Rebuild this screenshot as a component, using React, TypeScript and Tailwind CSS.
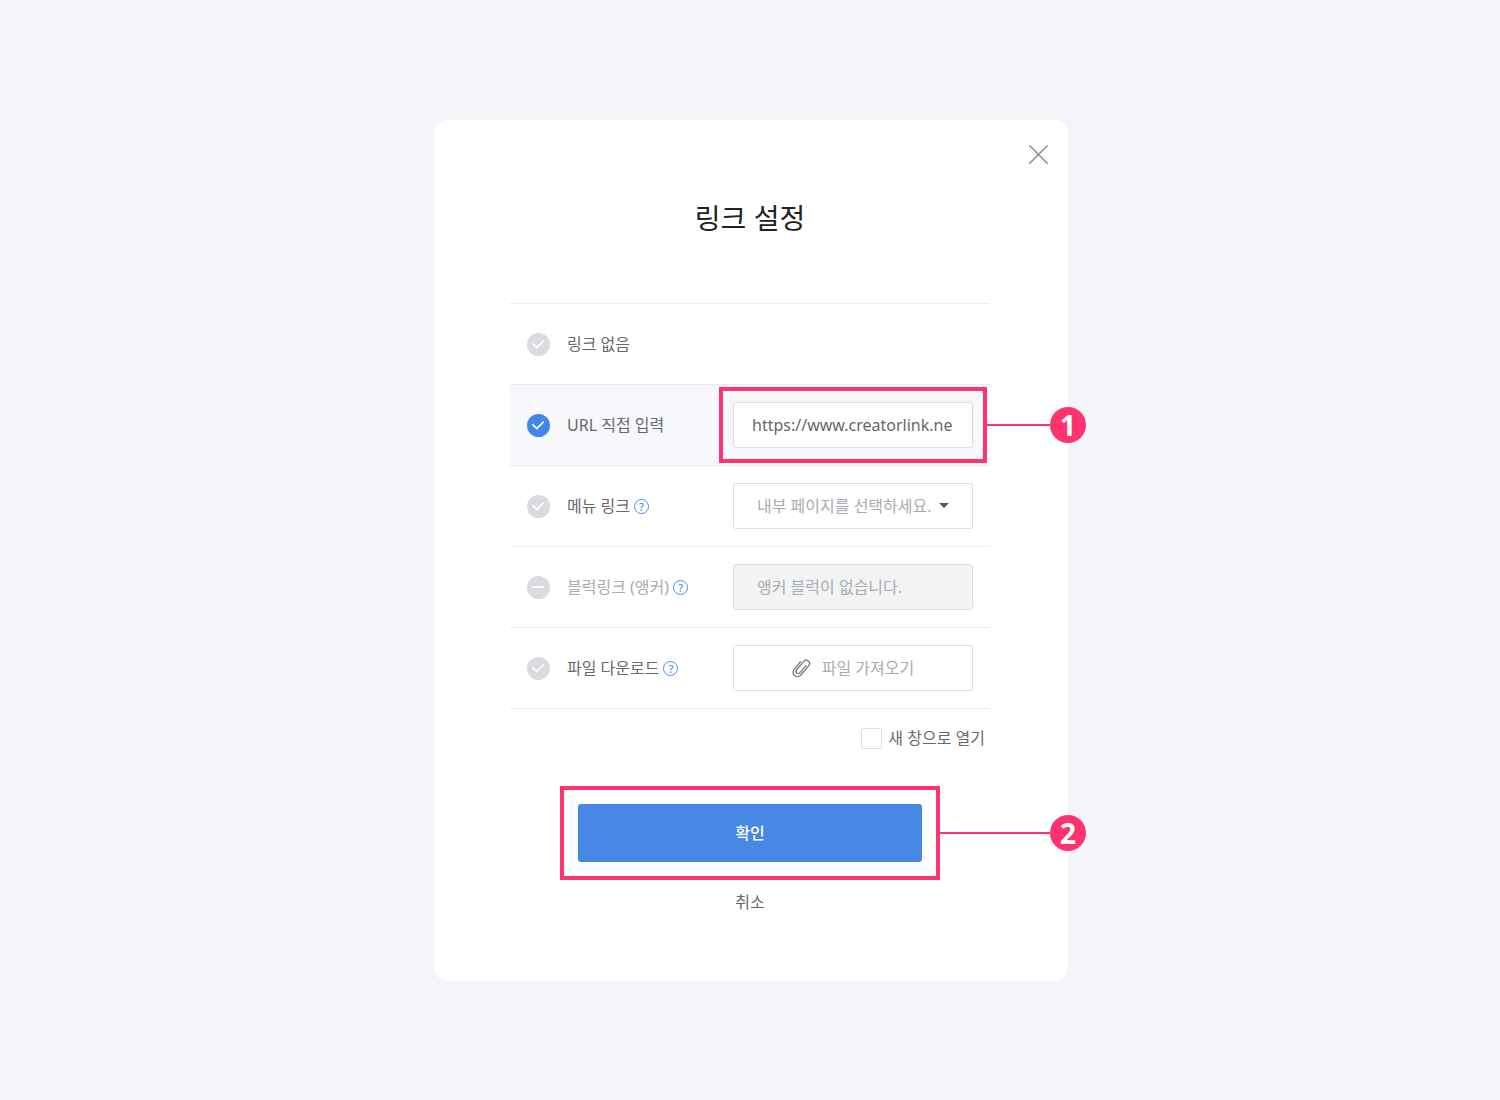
import { useState } from 'react';
import type { ReactNode } from 'react';
import { X } from 'lucide-react';

// Round radio with the check (or a dash when disabled) drawn over it
function RadioDot({ id, checked, disabled, onChange }: { id: string; checked: boolean; disabled?: boolean; onChange: () => void }) {
  return (
    <span className="grid size-6 shrink-0 place-items-center">
      <input
        type="radio"
        name="link"
        id={id}
        checked={checked}
        disabled={disabled}
        onChange={onChange}
        className="col-start-1 row-start-1 size-[23px] appearance-none rounded-full bg-[#dadbdf] checked:bg-[#4386e7]"
      />
      <svg viewBox="0 0 24 24" className="pointer-events-none col-start-1 row-start-1 size-6" fill="none" stroke="#fff" strokeWidth="2">
        {disabled ? <path d="M6.5 12h11" /> : <path d="M6.5 11.3l4.3 4.2 7-7" strokeWidth="1.7" />}
      </svg>
    </span>
  );
}

function HelpButton() {
  return (
    <button
      type="button"
      aria-label="도움말"
      className="ml-1 flex size-[15px] items-center justify-center rounded-full border border-[#4b8df0] text-[11px] leading-none font-medium text-[#4b8df0]"
    >
      ?
    </button>
  );
}

function Badge({ children }: { children: ReactNode }) {
  return (
    <span className="flex size-9 shrink-0 items-center justify-center rounded-full bg-[#ff336e] font-['Open_Sans'] text-[28px] leading-9 font-bold text-white">
      {children}
    </span>
  );
}

function PaperclipIcon() {
  return (
    <svg viewBox="0 0 22 22" className="size-[22px]" fill="none" stroke="#7d7f83" strokeWidth="1.4" strokeLinecap="round">
      <g transform="rotate(40 11 11)">
        <path d="M13.2 6v9.500a2.200 2.200 0 0 1-4.400 0V4.200a3.300 3.300 0 0 1 6.600 0v12.300a4.400 4.400 0 0 1-8.800 0V6.500" />
      </g>
    </svg>
  );
}

export default function App() {
  const [selected, setSelected] = useState('url');
  const [url, setUrl] = useState('https://www.creatorlink.ne');

  const rowClass = 'flex h-[81px] items-center border-b border-[#ebecee] pr-[17px] pl-4';
  const labelClass = 'ml-[17px]';
  const fieldClass = 'h-[46px] w-full rounded-[3px] border border-[#dcdde0]';

  return (
    <div className="flex min-h-screen justify-center bg-[#f3f5f9] py-[120px] pl-0.5 font-['Noto_Sans','Noto_Sans_CJK_KR',sans-serif] text-base leading-6 text-[#66686c]">
      <main className="w-full max-w-[634px] rounded-[14px] bg-white pb-[67px]">
        <div className="flex justify-end pt-6 pr-5">
          <button type="button" aria-label="닫기" className="flex size-5 items-center justify-center text-[#8b8b8b]">
            <X size={35} strokeWidth={1} className="shrink-0" />
          </button>
        </div>

        <h1 className="mt-[34px] pr-0.5 text-center text-[28px] leading-10 text-[#222]">링크 설정</h1>

        <form className="mt-[65px] pr-[78px] pl-[76px]">
          <div className="border-t border-[#ebecee]">
            {/* 링크 없음 */}
            <div className={rowClass}>
              <RadioDot id="none" checked={selected === 'none'} onChange={() => setSelected('none')} />
              <label htmlFor="none" className={labelClass}>링크 없음</label>
            </div>

            {/* URL 직접 입력 */}
            <div className={`${rowClass} bg-[#f7f8fb]`}>
              <RadioDot id="url" checked={selected === 'url'} onChange={() => setSelected('url')} />
              <label htmlFor="url" className={labelClass}>URL 직접 입력</label>
              <div className="relative ml-auto w-60">
                <input
                  type="text"
                  aria-label="URL"
                  value={url}
                  onChange={(e) => setUrl(e.target.value)}
                  className={`${fieldClass} bg-white px-[18px]`}
                />
                <div className="pointer-events-none absolute -inset-x-[14px] -inset-y-[15px] border-4 border-[#ff336e]"></div>
                <div className="pointer-events-none absolute top-1/2 left-[254px] flex -translate-y-1/2 items-center">
                  <span className="h-0.5 w-[63px] bg-[#ff336e]"></span>
                  <Badge>1</Badge>
                </div>
              </div>
            </div>

            {/* 메뉴 링크 */}
            <div className={rowClass}>
              <RadioDot id="menu" checked={selected === 'menu'} onChange={() => setSelected('menu')} />
              <label htmlFor="menu" className={labelClass}>메뉴 링크</label>
              <HelpButton />
              <div className="relative ml-auto w-60">
                <select aria-label="내부 페이지" className={`${fieldClass} appearance-none bg-white pl-[23px] text-[#aaabae]`}>
                  <option>내부 페이지를 선택하세요.</option>
                </select>
                <svg viewBox="0 0 10 5" className="pointer-events-none absolute top-5 right-6 h-[5px] w-2.5" fill="#55575b">
                  <path d="M0 0h10L5 5z" />
                </svg>
              </div>
            </div>

            {/* 블럭링크 */}
            <div className={rowClass}>
              <RadioDot id="anchor" disabled checked={false} onChange={() => setSelected('anchor')} />
              <label htmlFor="anchor" className={`${labelClass} text-[#aaabae]`}>블럭링크 (앵커)</label>
              <HelpButton />
              <select aria-label="앵커 블럭" disabled className={`${fieldClass} ml-auto max-w-60 appearance-none bg-[#f2f3f5] pl-[23px] text-[#aaabae] opacity-100`}>
                <option>앵커 블럭이 없습니다.</option>
              </select>
            </div>

            {/* 파일 다운로드 */}
            <div className={rowClass}>
              <RadioDot id="file" checked={selected === 'file'} onChange={() => setSelected('file')} />
              <label htmlFor="file" className={labelClass}>파일 다운로드</label>
              <HelpButton />
              <button type="button" className={`${fieldClass} ml-auto flex max-w-60 items-center justify-center gap-2.5 pr-0.5 text-[#aaabae]`}>
                <PaperclipIcon />
                파일 가져오기
              </button>
            </div>
          </div>

          <div className="mt-[17px] flex items-center justify-end gap-1.5 pr-[5px]">
            <input type="checkbox" id="new-window" className="size-[21px] appearance-none rounded-[2px] border border-[#dcdde0] checked:bg-[#4386e7]" />
            <label htmlFor="new-window">새 창으로 열기</label>
          </div>

          <div className="relative mx-auto mt-[54px] w-[344px]">
            <button type="button" className="h-[58px] w-full rounded-[3px] bg-[#4788e7] font-medium text-white">
              확인
            </button>
            <div className="pointer-events-none absolute -inset-x-[18px] -inset-y-[18px] border-4 border-[#ff336e]"></div>
            <div className="pointer-events-none absolute top-1/2 left-[362px] flex -translate-y-1/2 items-center">
              <span className="h-0.5 w-[110px] bg-[#ff336e]"></span>
              <Badge>2</Badge>
            </div>
          </div>

          <div className="mt-7 flex justify-center">
            <button type="button">취소</button>
          </div>
        </form>
      </main>
    </div>
  );
}
